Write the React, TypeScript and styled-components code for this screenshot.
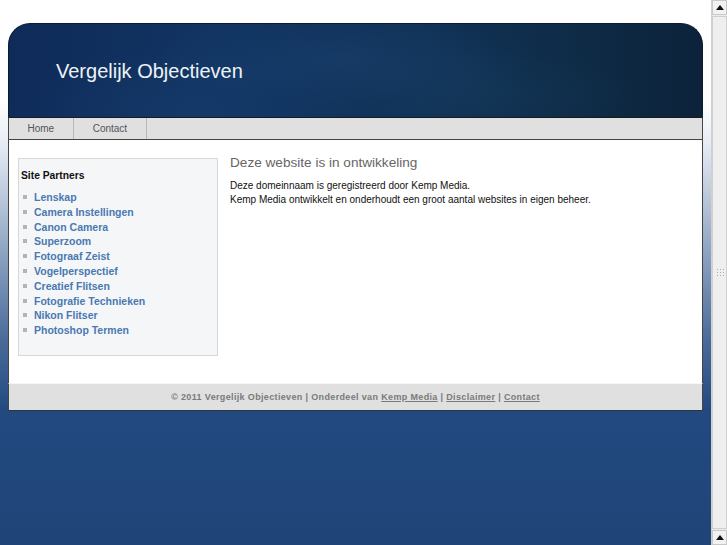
import React from 'react'
import styled, { createGlobalStyle } from 'styled-components'

const GlobalStyle = createGlobalStyle`
  html, body {
    margin: 0;
    padding: 0;
    height: 545px;
    overflow: hidden;
  }
  body {
    font-family: "Liberation Sans", Arial, sans-serif;
  }
`

const partners = [
  'Lenskap',
  'Camera Instellingen',
  'Canon Camera',
  'Superzoom',
  'Fotograaf Zeist',
  'Vogelperspectief',
  'Creatief Flitsen',
  'Fotografie Technieken',
  'Nikon Flitser',
  'Photoshop Termen',
]

const App = () => {
  return (
    <Window>
      <GlobalStyle />
      <Page>
        <Wrapper>
          <Header>
            <Title>Vergelijk Objectieven</Title>
          </Header>
          <Nav>
            <NavItem href="#">Home</NavItem>
            <NavItem href="#">Contact</NavItem>
          </Nav>
          <Content>
            <Sidebar>
              <SideTitle>Site Partners</SideTitle>
              <PartnerList>
                {partners.map((p) => (
                  <li key={p}>
                    <a href="#">{p}</a>
                  </li>
                ))}
              </PartnerList>
            </Sidebar>
            <Main>
              <Heading>Deze website is in ontwikkeling</Heading>
              <Text>
                Deze domeinnaam is geregistreerd door Kemp Media.
                <br />
                Kemp Media ontwikkelt en onderhoudt een groot aantal websites in eigen beheer.
              </Text>
            </Main>
          </Content>
          <Footer>
            © 2011 Vergelijk Objectieven | Onderdeel van <a href="#">Kemp Media</a> |{' '}
            <a href="#">Disclaimer</a> | <a href="#">Contact</a>
          </Footer>
        </Wrapper>
      </Page>
      <ScrollBar>
        <ScrollButton>
          <Arrow />
        </ScrollButton>
        <Thumb>
          <Grip />
        </Thumb>
        <ScrollButton>
          <Arrow />
        </ScrollButton>
      </ScrollBar>
    </Window>
  )
}

const Window = styled.div`
  display: flex;
  width: 727px;
  height: 545px;
  overflow: hidden;
`

const Page = styled.div`
  flex: 1;
  padding: 23px 8px 0 8px;
  background: linear-gradient(
    to bottom,
    #ffffff 0px,
    #ffffff 100px,
    #e9eef5 140px,
    #8fa5c3 250px,
    #4a6b99 340px,
    #224a80 410px,
    #1f4478 545px
  );
`

const Wrapper = styled.div`
  display: flex;
  flex-direction: column;
`

const Header = styled.div`
  height: 93px;
  border: 1px solid #0c1b2e;
  border-bottom: none;
  border-radius: 22px 22px 0 0;
  background:
    radial-gradient(ellipse 200px 45px at 330px 35px, rgba(40, 85, 135, 0.22), transparent),
    radial-gradient(ellipse 180px 60px at 180px 85px, rgba(30, 75, 130, 0.25), transparent),
    radial-gradient(ellipse 160px 45px at 470px 70px, rgba(30, 75, 110, 0.22), transparent),
    linear-gradient(to right, #0f2b59 0%, #113462 30%, #103257 60%, #0e2a44 85%, #0c223a 100%);
  display: flex;
  align-items: center;
  padding-left: 47px;
`

const Title = styled.h1`
  margin: 0;
  font-weight: normal;
  font-size: 20px;
  color: #eef2f7;
  padding-top: 2px;
`

const Nav = styled.div`
  display: flex;
  height: 21px;
  background: #e0e0e0;
  border-left: 1px solid #444;
  border-right: 1px solid #444;
  border-top: 1px solid #1a1a1a;
  border-bottom: 1px solid #444;
`

const NavItem = styled.a`
  display: flex;
  align-items: center;
  padding: 0 19px 0 18.5px;
  border-right: 1px solid #b8b8b8;
  font-size: 10px;
  color: #555;
  text-decoration: none;
`

const Content = styled.div`
  display: flex;
  align-items: flex-start;
  gap: 12px;
  height: 243px;
  box-sizing: border-box;
  padding: 15px 9px 0 9px;
  background: #fff;
  border-left: 1px solid #444;
  border-right: 1px solid #444;
`

const Sidebar = styled.div`
  width: 196px;
  height: 186px;
  margin-top: 3px;
  background: #f5f6f8;
  border: 1px solid #d8d8d8;
  padding: 11px 0 0 2px;
  box-sizing: content-box;
  height: 185px;
`

const SideTitle = styled.div`
  font-size: 10.3px;
  font-weight: bold;
  color: #111;
  margin-bottom: 9px;
`

const PartnerList = styled.ul`
  list-style: none;
  margin: 0;
  padding: 0;
  li {
    position: relative;
    padding-left: 13px;
    font-size: 10.5px;
    line-height: 14.8px;
    font-weight: bold;
  }
  li::before {
    content: '';
    position: absolute;
    left: 2px;
    top: 5px;
    width: 4px;
    height: 4px;
    background: #b4b4b4;
  }
  a {
    color: #4a79b1;
    text-decoration: none;
  }
`

const Main = styled.div`
  flex: 1;
`

const Heading = styled.h2`
  margin: 0 0 8px 0;
  font-size: 13.6px;
  line-height: 16px;
  font-weight: normal;
  color: #666;
`

const Text = styled.p`
  margin: 0;
  font-size: 10px;
  line-height: 14px;
  color: #111;
`

const Footer = styled.div`
  height: 26px;
  display: flex;
  align-items: center;
  justify-content: center;
  white-space: pre;
  background: #e0e0e0;
  border-top: 1px solid #f6f6f6;
  border-left: 1px solid #444;
  border-right: 1px solid #444;
  border-bottom: 1px solid #333;
  font-size: 9px;
  font-weight: bold;
  color: #7a7a7a;
  letter-spacing: 0.35px;
  a {
    color: #7a7a7a;
    text-decoration: underline;
  }
`

const ScrollBar = styled.div`
  width: 15px;
  height: 545px;
  display: flex;
  flex-direction: column;
  background: #ececec;
  border-left: 1px solid #d0d0d0;
`

const ScrollButton = styled.div`
  height: 15px;
  display: flex;
  align-items: center;
  justify-content: center;
  background: #f2f2f2;
  border: 1px solid #c8c8c8;
  box-sizing: border-box;
`

const Arrow = styled.div`
  width: 0;
  height: 0;
  border-left: 4px solid transparent;
  border-right: 4px solid transparent;
  border-bottom: 5px solid #111;
`

const Thumb = styled.div`
  flex: 1;
  margin: 1px 0;
  background: #efefef;
  border: 1px solid #cfcfcf;
  display: flex;
  align-items: center;
  justify-content: center;
`

const Grip = styled.div`
  width: 8px;
  height: 10px;
  background-image: radial-gradient(circle, #a8a8a8 0.8px, transparent 1px);
  background-size: 3px 3px;
`

export default App
